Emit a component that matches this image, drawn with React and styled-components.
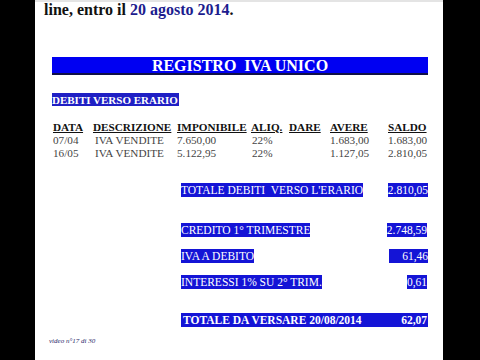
import React from "react";
import styled, { createGlobalStyle } from "styled-components";

const Global = createGlobalStyle`
  html, body { margin: 0; padding: 0; background: #000; }
  body { width: 480px; height: 360px; overflow: hidden; font-family: "Liberation Serif", "Times New Roman", serif; }
`;

const Sheet = styled.div`
  margin-left: 35px;
  width: 408px;
  height: 360px;
  background: #fff;
  display: flex;
  flex-direction: column;
  box-sizing: border-box;
  border-top: 2px solid #e4e4e4;
`;

const Intro = styled.div`
  margin-left: 9px;
  margin-top: -2px;
  font-size: 16px;
  font-weight: bold;
  line-height: 20px;
  color: #111;
`;

const Accent = styled.span`
  color: #1c1c8e;
`;

const Content = styled.div`
  margin: 0 0 0 17px;
  width: 376px;
  display: flex;
  flex-direction: column;
`;

const Banner = styled.div`
  margin-top: 37px;
  height: 16px;
  background: #0000f2;
  border-bottom: 2px solid #101048;
  color: #fff;
  font-weight: bold;
  font-size: 16px;
  line-height: 17px;
  text-align: center;
  white-space: pre;
`;

const Tag = styled.div`
  align-self: flex-start;
  margin-top: 18px;
  height: 13px;
  background: #1f1fc4;
  color: #fff;
  font-weight: bold;
  font-size: 11px;
  line-height: 14px;
  padding-right: 1px;
`;

const Table = styled.div`
  margin-top: 15px;
  display: grid;
  grid-template-columns: 40px 84px 74px 38px 41px 58px 1fr;
  grid-auto-rows: 13px;
  font-size: 11.2px;
  line-height: 13px;
`;

const Head = styled.div`
  font-weight: bold;
  text-decoration: underline;
  color: #111;
  padding-left: ${(p) => p.$pad || 1}px;
  white-space: nowrap;
`;

const Cell = styled.div`
  color: #444;
  padding-left: ${(p) => p.$pad || 1}px;
  white-space: nowrap;
`;

const SumRow = styled.div`
  margin-top: ${(p) => p.$top}px;
  display: grid;
  grid-template-columns: 129px 1fr auto;
  height: 14px;
  font-size: 11.5px;
  line-height: 14px;
  color: #fff;
`;

const Label = styled.span`
  grid-column: 2;
  justify-self: start;
  background: #1414d6;
  white-space: pre;
`;

const Value = styled.span`
  grid-column: 3;
  background: #1414d6;
  text-align: right;
  min-width: ${(p) => p.$min || 0}px;
  margin-right: ${(p) => p.$mr || 0}px;
`;

const TotalRow = styled.div`
  margin-top: 24px;
  margin-left: 129px;
  height: 14px;
  background: #1414d6;
  color: #fff;
  font-weight: bold;
  font-size: 11.5px;
  line-height: 14px;
  display: flex;
  justify-content: space-between;
  padding: 0 1px 0 2px;
`;

const Footer = styled.div`
  margin-top: 10px;
  margin-left: 14px;
  font-size: 7px;
  font-style: italic;
  color: #2a2a6a;
`;

const rows = [
  ["07/04", "IVA VENDITE", "7.650,00", "22%", "", "1.683,00", "1.683,00"],
  ["16/05", "IVA VENDITE", "5.122,95", "22%", "", "1.127,05", "2.810,05"],
];

const heads = ["DATA", "DESCRIZIONE", "IMPONIBILE", "ALIQ.", "DARE", "AVERE", "SALDO"];
const pads = [1, 1, 1, 1, 0, 0, 0];
const cellPads = [1, 3, 1, 2, 0, 0, 1];

export default function App() {
  return (
    <>
      <Global />
      <Sheet>
        <Intro>
          line, entro il <Accent>20 agosto 2014</Accent>.
        </Intro>
        <Content>
          <Banner>{"REGISTRO  IVA UNICO"}</Banner>
          <Tag>DEBITI VERSO ERARIO</Tag>
          <Table>
            {heads.map((h, i) => (
              <Head key={h} $pad={pads[i]}>{h}</Head>
            ))}
            {rows.map((r, ri) =>
              r.map((c, ci) => (
                <Cell key={ri + "-" + ci} $pad={cellPads[ci]}>{c}</Cell>
              ))
            )}
          </Table>
          <SumRow $top={23}>
            <Label>{"TOTALE DEBITI  VERSO L'ERARIO"}</Label>
            <Value>2.810,05</Value>
          </SumRow>
          <SumRow $top={26}>
            <Label>CREDITO 1° TRIMESTRE</Label>
            <Value $mr={1}>2.748,59</Value>
          </SumRow>
          <SumRow $top={12}>
            <Label>IVA A DEBITO</Label>
            <Value $min={39}>61,46</Value>
          </SumRow>
          <SumRow $top={12}>
            <Label>INTERESSI 1% SU 2° TRIM.</Label>
            <Value $mr={1}>0,61</Value>
          </SumRow>
          <TotalRow>
            <span>TOTALE DA VERSARE 20/08/2014</span>
            <span>62,07</span>
          </TotalRow>
        </Content>
        <Footer>video n°17 di 30</Footer>
      </Sheet>
    </>
  );
}
